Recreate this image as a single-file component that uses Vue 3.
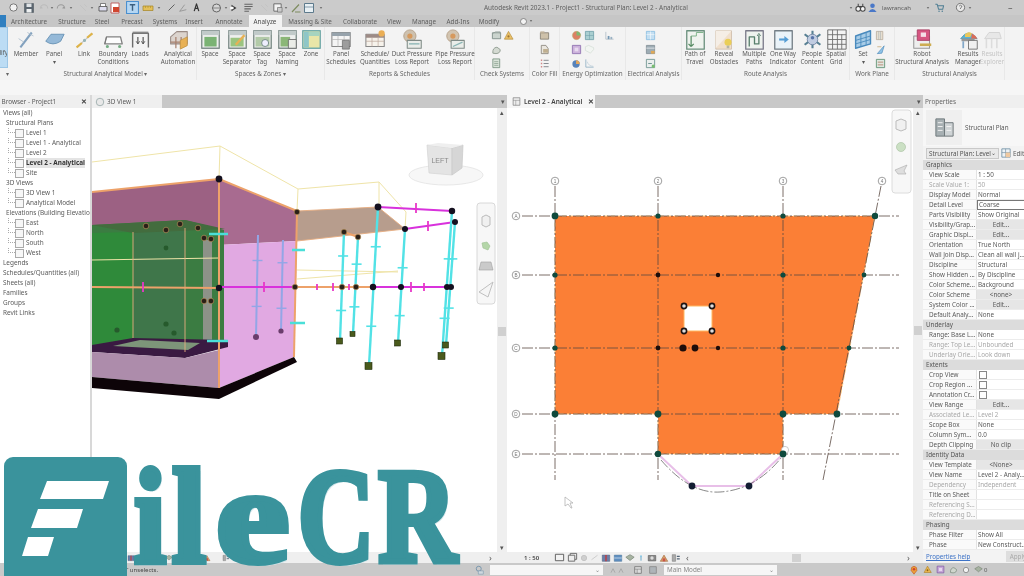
<script setup>
import { h } from 'vue'

const R = (x, y, w, h2) => `M${x} ${y}h${w}v${h2}h${-w}z`
const C = (x, y, r) => `M${x - r} ${y}a${r} ${r} 0 1 0 ${2 * r} 0a${r} ${r} 0 1 0 ${-2 * r} 0z`
const framed = (fill, extra = []) => [
  [R(2, 2, 20, 20), '#eef0ee', '#6f7f7c', 1.6],
  [R(2, 2, 20, 5), '#b9c4c2', 'none', 0],
  ...fill,
  ...extra
]

const icons = {
  member: [['M5 21L18 4', 'none', '#6f93b5', 2.4], ['M3 11l6 4', 'none', '#a5b8c8', 1], ['M13 4l7 4', 'none', '#a5b8c8', 1]],
  panelb: [['M2 14L8 6H23L19 14Q10 20 2 14z', '#85b0d4', '#4d7fa8', 1]],
  link: [['M3 21L21 5', 'none', '#bbb', 1.4], ['M3 21L9 16', 'none', '#dba92c', 2.6], ['M15 10L21 5', 'none', '#dba92c', 2.6], [C(12, 13, 1.8), '#8aa', 'none', 0]],
  boundary: [['M4 9H20L22 17H2z', '#fff', '#6f6f6f', 1.5], ['M4 9L2 17', 'none', '#5f5f5f', 1], [C(5, 20, 1.8), '#5fa070', 'none', 0], [C(19, 20, 1.8), '#5fa070', 'none', 0]],
  loads: [['M3 21V5H21V21', 'none', '#555', 1.6], ['M9 9V17M15 9V17', 'none', '#333', 1.3], ['M9 17l-2-3M9 17l2-3M15 17l-2-3M15 17l2-3', 'none', '#333', 1], [R(3, 3, 18, 2), '#777', 'none', 0]],
  auto: [['M3 9L10 3H22V17H3z', '#d8cfc8', '#8b7a72', 1.2], ['M9 9V22M15 9V22M3 15H22', 'none', '#9a6d58', 1.4], ['M14 13L22 9V19L14 23z', '#e7a63a', '#b27c1e', .8]],
  space: framed([[R(5, 9, 14, 11), '#65a85e', 'none', 0]]),
  sep: framed([[R(4, 10, 15, 10), '#8cbc6c', 'none', 0], ['M10 18L20 7', 'none', '#e6a63a', 2.6]]),
  tag: framed([[R(4, 9, 16, 11), '#a7c49b', 'none', 0], [C(15, 16, 4), '#eef', '#55706a', 1]]),
  naming: framed([[R(4, 9, 11, 11), '#79ad62', 'none', 0], [R(13, 12, 9, 10), '#e9ebe6', '#555', 1]]),
  zone: [[R(2, 2, 20, 20), '#e8e49b', '#5fa0a0', 1.6], [R(3, 3, 6, 18), '#7dbfc0', 'none', 0], [R(9, 3, 12, 5), '#99cfb6', 'none', 0]],
  pansch: [[R(1, 4, 21, 16), '#f6f6f6', '#777', 1.2], [R(1, 4, 21, 4), '#8796a0', 'none', 0], ['M1 12H22M8 8V20M15 8V20', 'none', '#aaa', .8], [R(13, 13, 8, 10), '#8f8f8f', '#444', .7]],
  sched: [[R(1, 6, 21, 14), '#f7f2ea', '#777', 1.2], [R(1, 6, 21, 4), '#8f7a73', 'none', 0], ['M1 14H22M8 10V20M15 10V20', 'none', '#b39a8d', .8], [C(19, 5, 3.6), '#e9a23a', 'none', 0]],
  duct: [[C(9, 8, 7), '#c7b9a4', '#a88f72', 1], [C(9, 8, 3), '#d18a43', 'none', 0], [R(6, 13, 16, 9), '#e9ece8', '#6c7a75', 1.2], ['M8 17H20', 'none', '#7aa', 1.5]],
  pipe: [[C(9, 8, 7), '#cdbca5', '#a88f72', 1], [C(9, 8, 3), '#d18a43', 'none', 0], [R(7, 13, 15, 9), '#e9ece8', '#6c7a75', 1.2], ['M9 20L20 15', 'none', '#7aa', 1.5]],
  path: [[R(2, 2, 20, 21), '#eff4ee', '#54806a', 1.5], ['M7 8V20M7 20l-3-3M7 20l3-3', 'none', '#3c7b4b', 1.4], ['M7 8H13V4H21', 'none', '#5da06b', 1]],
  reveal: [[R(2, 2, 18, 21), '#f0dcc6', '#c9b6a1', 1], ['M2 2L20 2L2 22z', '#f6eee4', 'none', 0], [C(16, 15, 4), '#e9c83c', 'none', 0], [R(14.5, 19, 3, 3), '#aa9', 'none', 0]],
  multi: [[R(2, 2, 20, 21), '#eef2ee', '#667', 1.5], ['M6 20V9H12V17H17V7', 'none', '#3c6b55', 1.5], ['M17 5l-2 3M17 5l2 3', 'none', '#3c6b55', 1]],
  oneway: [[R(2, 2, 20, 21), '#e9f4fb', '#5d6a74', 1.5], ['M7 12H16', 'none', '#3a8fd0', 2.4], ['M13 8l5 4l-5 4z', '#3a8fd0', 'none', 0]],
  people: [[C(12, 12, 6), '#b8c6de', '#5a6f95', 1], [C(12, 10, 2), '#3b5d9b', 'none', 0], ['M12 2V6M12 18V22M3 6L7 9M21 6L17 9M3 18L7 15M21 18L17 15', 'none', '#3e6d84', 2.4]],
  grid: [[R(2, 1, 21, 22), '#f4f4f4', '#555', 1.1], ['M2 6.5H23M2 12H23M2 17.5H23M7.5 1V23M13 1V23M18 6V23', 'none', '#555', 1]],
  set: [['M3 8L20 2V17L3 22z', '#9bc6e6', '#2c78b4', 1.6], ['M3 13L20 8M3 17L20 12M9 6V20M15 4V18', 'none', '#2c78b4', 1]],
  robot: [[R(2, 8, 18, 14), '#eee', '#888', 1.2], [R(6, 1, 14, 12), '#d23a6e', '#98204a', 1], [R(10, 4, 6, 5), '#f6dbe5', 'none', 0], ['M9 18H22', 'none', '#c7a036', 3]],
  results: [['M3 11Q12 -2 22 11z', '#40a9d0', '#2a7d9a', .8], ['M8 6Q12 2 16 5L14 9H8z', '#e9c142', 'none', 0], ['M16 5Q20 7 22 11H15z', '#d9543c', 'none', 0], [R(4, 11, 15, 3), '#888', 'none', 0], [R(12, 13, 10, 10), '#f0f0f0', '#555', 1], ['M6 14V22', 'none', '#6f9ac0', 2]],
  explore: [['M3 11L8 4H20L22 11z', '#e6e6e6', '#ccc', 1], ['M5 11V22M11 11V22M17 11V22', 'none', '#d8d8d8', 1.8]],
  s1: [[R(3, 6, 18, 13), '#c5cfc8', '#6d7f78', 2], ['M3 8L10 4H20V8', 'none', '#7a8a83', 1.6]],
  s2: [['M12 3L22 20H3z', '#eab84e', '#a97a1c', 1.5], [C(12, 14, 2.4), '#8c5f14', 'none', 0]],
  s3: [['M4 20Q3 8 13 7L20 12Q21 20 11 21z', '#cfd6cd', '#7e8c7f', 2]],
  s4: [[R(4, 2, 15, 19), '#d6e2d6', '#5f7d68', 1.8], ['M7 8H16M7 12H16M7 16H16', 'none', '#56745e', 1.2]],
  f1: [[R(3, 6, 18, 14), '#c8b99e', '#6f675a', 1.8], [R(3, 3, 9, 5), '#b5a58a', 'none', 0]],
  f2: [['M5 3H15L20 10V21H5z', '#e8e4dc', '#746e64', 1.8], [R(9, 11, 11, 8), '#b7a47f', 'none', 0]],
  f3: [['M4 5H7M4 12H7M4 19H7', 'none', '#c77', 3], ['M10 5H21M10 12H21M10 19H21', 'none', '#6a6f76', 2]],
  e1: [[C(12, 12, 9), '#d96d4c', '#aa5', 1], ['M12 3A9 9 0 0 1 21 12H12z', '#6aaf5b', 'none', 0]],
  e2: [[R(3, 3, 18, 18), '#9ec9cc', '#4f8a96', 1.6], ['M3 12H21M12 3V21', 'none', '#4f8a96', 1]],
  e3: [[R(3, 3, 18, 18), '#c6a7d8', '#7a55a0', 1.8], [R(8, 8, 8, 8), '#e6d7ef', 'none', 0]],
  e4: [['M3 6L10 3L21 8V12L14 20L3 14z', '#f2f6f2', '#c9d4cc', 1.4]],
  e5: [[C(11, 13, 8), '#3c6fb0', 'none', 0], ['M11 5A8 8 0 0 1 19 13H11z', '#e29a42', 'none', 0]],
  e6: [['M4 3V20H21', 'none', '#7ea3bb', 1.8], ['M7 8Q10 18 20 18', 'none', '#a9c0cf', 1.4]],
  e7: [['M4 4V20H21', 'none', '#9aaab6', 1.6], [R(8, 13, 4, 7), '#5f88a8', 'none', 0], [R(14, 15, 4, 5), '#8aa6bb', 'none', 0]],
  el1: [[R(3, 3, 18, 18), '#bcdcf2', '#76b2dc', 1.8], ['M3 10H21M12 3V21', 'none', '#fff', 1.2]],
  el2: [[R(3, 3, 18, 18), '#8fa0aa', '#5d6b74', 1.4], ['M3 9H21', 'none', '#dfe5e8', 2], [R(13, 15, 8, 6), '#dc9c3c', 'none', 0]],
  el3: [[R(3, 3, 18, 18), '#e9eeec', '#4f7d7a', 1.8], ['M7 12H15', 'none', '#4f7d7a', 2], [C(18, 18, 3.6), '#63b45b', 'none', 0]],
  w1: [[R(3, 3, 14, 18), '#e6dccc', '#aa9a86', 1.6], ['M8 3V21M12 3V21', 'none', '#8b9aa0', 1]],
  w2: [['M5 21L20 4L15 20z', '#7fbce8', '#3c7fb4', 1.6], ['M5 6H14', 'none', '#b99658', 1.6]],
  w3: [[R(3, 3, 18, 18), '#dce6dd', '#3d7a55', 1.8], ['M6 9H18M6 15H18', 'none', '#a3583c', 1.6]],
  q1: [[C(12, 12, 8), '#f2f2f2', '#6e6e6e', 2]],
  q2: [[R(3, 3, 18, 18), '#5b6670', '#404a52', 1], [R(7, 3, 10, 7), '#dfe3e6', 'none', 0], [R(7, 14, 10, 7), '#eef0f1', 'none', 0]],
  q3: [['M3 13A9 9 0 0 1 21 13', 'none', '#bbb', 2.6], ['M3 13l3-5l3 5z', '#bbb', 'none', 0]],
  q4: [['M21 13A9 9 0 0 0 3 13', 'none', '#9a9a9a', 2.6], ['M21 13l-3-5l-3 5z', '#9a9a9a', 'none', 0]],
  q5: [[R(4, 9, 16, 9), '#dde', '#555', 1.8], [R(7, 3, 10, 6), '#fff', '#555', 1.4]],
  q6: [[R(4, 2, 16, 20), '#fff', '#b55', 1.8], [R(8, 10, 12, 10), '#d0452e', 'none', 0]],
  q7: [[R(1, 1, 22, 22), '#b5d6f2', '#4a8fcf', 2], ['M7 7H17M12 7V18', 'none', '#3c5f7f', 2.6]],
  q8: [[R(2, 8, 20, 9), '#e4c05a', '#a58424', 1.4], ['M7 8V12M12 8V12M17 8V12', 'none', '#a58424', 1]],
  q9: [['M4 20L20 4', 'none', '#555', 2.4]],
  q10: [['M4 20L16 4M4 20L20 16', 'none', '#8a8a8a', 1.8]],
  q11: [['M7 20L12 4L17 20M9 14H15', 'none', '#333', 2.6]],
  q12: [[C(11, 12, 8), '#d6d6d6', '#666', 2], ['M3 12H19', 'none', '#666', 1.4]],
  q13: [['M6 4L18 12L6 20z', '#333', 'none', 0], [R(3, 9, 8, 6), '#fff', 'none', 0]],
  q14: [['M3 5H21M3 10H21M3 15H17M3 20H13', 'none', '#666', 2.2]],
  q15: [['M5 5L19 19M15 3L21 9', 'none', '#c2c2c2', 2]],
  q16: [[R(4, 4, 16, 16), '#f3f3f3', '#666', 2], [R(12, 12, 10, 10), '#ccc', '#666', 1.4]],
  q17: [['M4 20L18 5M10 20H21', 'none', '#7e8c60', 2.4]],
  q18: [[R(3, 3, 18, 18), '#e8f0f4', '#5d7a8c', 2], ['M3 10H21', 'none', '#5d7a8c', 1.4]],
  arrow: [['M7 9H17L12 15z', '#555', 'none', 0]],
  bino: [[C(7, 15, 5), '#f5f5f5', '#444', 2.2], [C(17, 15, 5), '#f5f5f5', '#444', 2.2], ['M7 4V10M17 4V10M7 10H17', 'none', '#444', 2.2]],
  user: [[C(12, 8, 5), '#4a78c8', 'none', 0], ['M3 22Q12 8 21 22z', '#4a78c8', 'none', 0]],
  cart: [['M3 5H7L10 16H19L21 8H8', 'none', '#4d7d93', 2.2], [C(11, 20, 1.6), '#4d7d93', 'none', 0], [C(18, 20, 1.6), '#4d7d93', 'none', 0]],
  help: [[C(12, 12, 9), '#e8e8e8', '#555', 1.6], ['M9 9Q12 5 15 9Q15 12 12 13V15', 'none', '#555', 1.6]],
  tabico: [[C(12, 12, 9), '#e8e8e8', '#9aa', 2]],
  planico: [[R(3, 2, 18, 20), '#ededed', '#777', 1.8], ['M3 9H21M10 9V22', 'none', '#777', 1.2]],
  prop: [[R(3, 3, 9, 18), '#a7b0b3', '#6e777a', 1], [R(12, 7, 9, 14), '#cfd4d6', '#6e777a', 1], ['M5 7H10M5 11H10M5 15H10M14 11H19M14 15H19', 'none', '#f4f4f4', 1]],
  editt: [[R(2, 2, 20, 20), '#eef3f6', '#6f8ea3', 2], ['M2 11H22M11 2V22', 'none', '#6f8ea3', 1.6], [R(11, 11, 11, 11), '#f0c9a0', 'none', 0]],
  vc1: [[R(3, 5, 18, 14), '#f2f2f2', '#5a5a5a', 2]],
  vc2: [[R(3, 7, 14, 13), '#eee', '#666', 2], ['M7 7V3H21V16H17', 'none', '#666', 2]],
  vc3: [[C(12, 12, 8), '#cfcfcf', '#bbb', 2]],
  vc4: [['M4 18L20 6', 'none', '#c8c8c8', 2.4]],
  vc5: [[R(3, 5, 18, 15), '#6b7fa8', '#3e4d70', 1], ['M12 5V20', 'none', '#c33', 3]],
  vc6: [[R(3, 5, 18, 15), '#5f8fc0', '#3e6a90', 1], ['M3 12H21', 'none', '#cde', 2]],
  vc7: [['M2 10L12 4L22 10L12 18z', '#a7b3a2', '#6a7868', 1.4]],
  vc8: [['M12 6V20', 'none', '#6aa8c8', 3], [C(12, 7, 3), '#8cc8e4', 'none', 0]],
  vc9: [[R(3, 6, 18, 13), '#8a8a8a', '#555', 1.4], [C(12, 12, 4), '#ddd', 'none', 0]],
  vc10: [['M3 20L12 5L21 20z', '#d7a06a', '#a3693c', 1.4], ['M9 20V13H15V20', '#c9534a', 'none', 0]],
  vc11: [[R(3, 4, 8, 16), '#aaa', '#666', 1], ['M14 8H21M14 14H21', 'none', '#567', 2.6]],
  st1: [['M6 20L12 8L18 20', 'none', '#9a9a9a', 2]],
  st2: [[R(4, 4, 16, 16), '#ddd', '#777', 2], ['M4 10H20M10 10V20', 'none', '#777', 1.4]],
  st3: [[R(4, 4, 16, 16), '#aeb4b8', '#888', 2]],
  st4: [['M12 3Q20 4 19 13L12 22L5 13Q4 4 12 3z', '#e9a23a', '#c65a2e', 1.6], [C(12, 10, 3), '#d3402e', 'none', 0]],
  st5: [[C(9, 9, 6), 'none', '#6c8ea8', 2], [R(8, 14, 12, 8), '#cfd8de', '#6c8ea8', 1.2]]
}

const Ico = (props) =>
  h(
    'svg',
    { viewBox: '0 0 24 24', width: props.s, height: props.s, class: 'ico' },
    (icons[props.k] || []).map((p) =>
      h('path', { d: p[0], fill: p[1], stroke: p[2], 'stroke-width': p[3], 'stroke-linejoin': 'round' })
    )
  )
Ico.props = ['k', 's']

const flow = (items, x0) => {
  let cur = x0
  return items.map((it) => {
    const w = it.w || 18
    const ml = it.c - w / 2 - cur
    cur = it.c + w / 2
    return { ...it, w, ml }
  })
}

const qat = flow(
  [
    ['q1', 13, 11], ['q2', 29, 12], ['q3', 44, 10], ['arrow', 52, 6], ['q4', 61, 10], ['arrow', 71, 6], ['q15', 83, 10], ['arrow', 92, 6],
    ['q5', 103, 12], ['q6', 115, 12], ['q7', 132, 13], ['q8', 148, 12], ['arrow', 159, 6], ['q9', 171, 9], ['q10', 183, 10], ['q11', 196, 11],
    ['q12', 217, 12], ['arrow', 226, 6], ['q13', 234, 10], ['q14', 248, 11], ['q15', 264, 10], ['q16', 277, 11], ['arrow', 286, 6], ['q17', 296, 12], ['q18', 309, 12], ['arrow', 321, 6]
  ].map(([k, c, s]) => ({ k, c, s, w: s })),
  0
)

const tabs = flow(
  [
    ['Architecture', 29, 30], ['Structure', 72, 30], ['Steel', 102, 20], ['Precast', 132, 26], ['Systems', 165, 26], ['Insert', 194, 20], ['Annotate', 229, 28],
    ['Analyze', 265, 33], ['Massing & Site', 310, 44], ['Collaborate', 360, 36], ['View', 394, 18], ['Manage', 424, 28], ['Add-Ins', 458, 26], ['Modify', 489, 24]
  ].map(([t, c, w]) => ({ t, c, w })),
  6
)

const big = (k, c, ...label) => ({ k, c, label, w: 18 })
const col = (c, ...keys) => ({ c, col: keys, w: 13 })

const panels = [
  { title: 'Structural Analytical Model ▾', x0: 15, x1: 197, items: [big('member', 26, 'Member'), big('panelb', 54, 'Panel', '▾'), big('link', 84, 'Link'), big('boundary', 113, 'Boundary', 'Conditions'), big('loads', 140, 'Loads'), big('auto', 178, 'Analytical', 'Automation')] },
  { title: 'Spaces & Zones ▾', x0: 197, x1: 325, items: [big('space', 210, 'Space'), big('sep', 237, 'Space', 'Separator'), big('tag', 262, 'Space', 'Tag'), big('naming', 287, 'Space', 'Naming'), big('zone', 311, 'Zone')] },
  { title: 'Reports & Schedules', x0: 325, x1: 475, items: [big('pansch', 341, 'Panel', 'Schedules'), big('sched', 375, 'Schedule/', 'Quantities'), big('duct', 412, 'Duct Pressure', 'Loss Report'), big('pipe', 455, 'Pipe Pressure', 'Loss Report')] },
  { title: 'Check Systems', x0: 475, x1: 530, items: [col(496, 's1', 's3', 's4'), col(508, 's2')] },
  { title: 'Color Fill', x0: 530, x1: 560, items: [col(544, 'f1', 'f2', 'f3')] },
  { title: 'Energy Optimization', x0: 560, x1: 626, items: [col(576, 'e1', 'e3', 'e5'), col(589, 'e2', 'e4', 'e6'), col(609, 'e7')] },
  { title: 'Electrical Analysis', x0: 626, x1: 682, items: [col(650, 'el1', 'el2', 'el3')] },
  { title: 'Route Analysis', x0: 682, x1: 850, items: [big('path', 695, 'Path of', 'Travel'), big('reveal', 724, 'Reveal', 'Obstacles'), big('multi', 754, 'Multiple', 'Paths'), big('oneway', 783, 'One Way', 'Indicator'), big('people', 812, 'People', 'Content'), big('grid', 836, 'Spatial', 'Grid')] },
  { title: 'Work Plane', x0: 850, x1: 895, items: [big('set', 863, 'Set', '▾'), col(880, 'w1', 'w2', 'w3')] },
  { title: 'Structural Analysis', x0: 895, x1: 1005, items: [big('robot', 922, 'Robot', 'Structural Analysis'), big('results', 968, 'Results', 'Manager'), { ...big('explore', 992, 'Results', 'Explorer'), faded: true }] }
].map((p) => ({ ...p, width: p.x1 - p.x0, items: flow(p.items, p.x0) }))

const tree = [
  ['Views (all)', 3], ['Structural Plans', 6],
  ['Level 1', 26, 1], ['Level 1 - Analytical', 26, 1], ['Level 2', 26, 1], ['Level 2 - Analytical', 26, 1, 1], ['Site', 26, 1],
  ['3D Views', 6], ['3D View 1', 26, 1], ['Analytical Model', 26, 1],
  ['Elevations (Building Elevation)', 6], ['East', 26, 1], ['North', 26, 1], ['South', 26, 1], ['West', 26, 1],
  ['Legends', 3], ['Schedules/Quantities (all)', 3], ['Sheets (all)', 3], ['Families', 3], ['Groups', 3], ['Revit Links', 3]
].map(([t, x, box, bold]) => ({ t, x: box ? 8 : x, box, bold }))

const props_ = [
  ['Graphics', '', 'h'], ['View Scale', '1 : 50'], ['Scale Value    1:', '50', 'g'], ['Display Model', 'Normal'], ['Detail Level', 'Coarse', 'i'], ['Parts Visibility', 'Show Original'],
  ['Visibility/Grap...', 'Edit...', 'b'], ['Graphic Displ...', 'Edit...', 'b'], ['Orientation', 'True North'], ['Wall Join Disp...', 'Clean all wall j...'], ['Discipline', 'Structural'],
  ['Show Hidden ...', 'By Discipline'], ['Color Scheme...', 'Background'], ['Color Scheme', '<none>', 'b'], ['System Color ...', 'Edit...', 'b'], ['Default Analy...', 'None'],
  ['Underlay', '', 'h'], ['Range: Base L...', 'None'], ['Range: Top Le...', 'Unbounded', 'g'], ['Underlay Orie...', 'Look down', 'g'],
  ['Extents', '', 'h'], ['Crop View', '', 'c'], ['Crop Region ...', '', 'c'], ['Annotation Cr...', '', 'c'], ['View Range', 'Edit...', 'b'], ['Associated Le...', 'Level 2', 'g'], ['Scope Box', 'None'], ['Column Sym...', '0.0'], ['Depth Clipping', 'No clip', 'b'],
  ['Identity Data', '', 'h'], ['View Template', '<None>', 'b'], ['View Name', 'Level 2 - Analy...'], ['Dependency', 'Independent', 'g'], ['Title on Sheet', ''], ['Referencing S...', '', 'g'], ['Referencing D...', '', 'g'],
  ['Phasing', '', 'h'], ['Phase Filter', 'Show All'], ['Phase', 'New Construct...']
].map(([l, v, t]) => ({ l, v, t }))

/* 3D view data, in page coordinates */
const faces = [
  ['92,192 219,179 219,230 92,225', '#9c6183'],
  ['219,179 297,211 297,241 219,245', '#a86b90'],
  ['297,211 378,207 405,229 297,241', '#b79d8d'],
  ['219,245 297,241 294,357 219,388', '#e1a9e2'],
  ['92,225 185,220 224,230 224,346 92,346', '#3b7c42'],
  ['92,233 133,232 133,338 92,345', '#2f8a3a'],
  ['133,232 185,228 185,338 133,338', '#3f764a'],
  ['92,225 185,220 225,229 133,233', '#436c3e'],
  ['203,240 212,240 212,345 203,345', '#8d9288'],
  ['92,345 133,338 228,340 228,347 185,358 92,352', '#3a1a42'],
  ['113,346 140,340 200,343 188,350', '#7d9579'],
  ['92,352 185,358 219,350 219,388 92,377', '#ad8cab'],
  ['92,377 219,388 219,399 92,388', '#0d0408'],
  ['219,388 294,357 297,362 219,399', '#0d0408']
]
const wire = 'M92 162L220 146L298 189L297 211M220 146L219 179M298 189L379 182L406 212L405 229M379 182L379 207M92 260L219 258M297 270L398 272M297 279L398 271'
const orangeLines = [
  [92, 192, 219, 179], [219, 179, 297, 211], [219, 179, 219, 388], [297, 211, 294, 357], [92, 287, 220, 288], [297, 287, 373, 287], [344, 232, 358, 237]
]
const thinOrange = 'M297 211L378 207L405 229L297 241M185 228L185 352M133 232L133 338'
const magLines = [[220, 287, 297, 287], [373, 287, 452, 287], [378, 207, 452, 211], [405, 229, 455, 222]]
const cols3d = [
  { a: [378, 207], b: [369, 366], t: [.25, .75] },
  { a: [405, 229], b: [398, 343], t: [.34, .76] },
  { a: [344, 232], b: [340, 341], t: [.22, .72] },
  { a: [358, 237], b: [353, 334], t: [.28, .72] },
  { a: [452, 211], b: [442, 356], t: [.33, .74] },
  { a: [455, 222], b: [446, 345], t: [.3, .7] }
]
const bluecols = [
  { a: [258, 235], b: [256, 337], t: [.25, .7] },
  { a: [283, 240], b: [281, 331], t: [.25, .75] }
]
const mkTicks = (cols) =>
  cols.flatMap((c) =>
    c.t.map((t) => ({
      x: c.a[0] + (c.b[0] - c.a[0]) * t,
      y: c.a[1] + (c.b[1] - c.a[1]) * t
    }))
  )
const ticks3d = mkTicks(cols3d)
const ticksBlue = mkTicks(bluecols)
const footings = [[340, 341, 6], [353, 334, 5], [369, 366, 7], [398, 343, 6], [442, 356, 7], [446, 345, 6]]
const pinkTicks = [[143, 287, 5], [264, 287, 5], [317, 287, 3], [333, 287, 4], [349, 287, 3], [411, 287, 5], [424, 287, 4], [416, 208, 5], [428, 226, 5]]
const blackNodes = [[219, 179, 3.4], [219, 288, 3.2], [378, 207, 3.4], [452, 211, 3.2], [455, 222, 3], [373, 287, 3.2], [401, 287, 3], [447, 287, 3], [451, 287, 3], [405, 229, 3]]
const ringNodes = [[297, 212], [295, 287], [344, 232], [358, 237], [342, 287], [356, 287], [204, 238], [211, 239], [204, 301], [211, 301], [146, 226], [166, 230], [180, 224], [198, 228]]

/* Plan view data */
const vGrid = [[555, '1'], [658, '2'], [783, '3']]
const hGrid = [[216, 'A'], [275, 'B'], [348, 'C'], [414, 'D'], [454, 'E']]
const planNodes = [
  [555, 216, 3.4], [658, 216, 2.6], [783, 216, 2.6], [875, 216, 3.2], [555, 275, 2.6], [783, 275, 2.6], [864, 275, 2.4],
  [555, 348, 2.6], [783, 348, 2.6], [849, 348, 2.4], [555, 414, 3.4], [658, 414, 3.4], [783, 414, 3.4], [837, 414, 3.4], [658, 454, 3.2], [783, 454, 3.4]
]
const planDark = [[658, 275, 2.4], [718, 275, 2.2], [658, 348, 2.4], [718, 348, 2.2], [683, 348, 3.6], [695, 348, 3.4]]
const rings = [[684, 306], [712, 306], [684, 331], [712, 331]]

/* Logo letters: cell width and horizontal scale that give the wordmark its proportions */
const logoLetters = [
  { ch: 'i', w: 38, sx: 0.85 },
  { ch: 'l', w: 40, sx: 0.9 },
  { ch: 'e', w: 87, sx: 1.22 },
  { ch: 'C', w: 80, sx: 0.78 },
  { ch: 'R', w: 83, sx: 0.8 }
]
</script>

<template>
  <div class="app">
    <div class="ui">
      <header class="titlebar">
        <Ico v-for="(q, i) in qat" :key="i" :k="q.k" :s="q.s" :style="{ marginLeft: q.ml + 'px' }" />
        <span class="title">Autodesk Revit 2023.1 - Project1 - Structural Plan: Level 2 - Analytical</span>
        <span class="tright">
          <Ico k="arrow" :s="6" />
          <Ico k="bino" :s="11" />
          <Ico k="user" :s="11" />
          <span class="uname">lawrancah</span>
          <Ico k="arrow" :s="6" class="mlarrow" />
          <Ico k="cart" :s="11" class="mlcart" />
          <Ico k="help" :s="11" class="mlhelp" />
          <Ico k="arrow" :s="6" />
          <span class="winmin">–</span>
        </span>
      </header>

      <nav class="tabs">
        <span class="filetab"></span>
        <span
          v-for="t in tabs"
          :key="t.t"
          class="tab"
          :class="{ active: t.t === 'Analyze' }"
          :style="{ marginLeft: t.ml + 'px', width: t.w + 'px' }"
        >{{ t.t }}</span>
        <span class="tabextra"><Ico k="q1" :s="9" /><Ico k="arrow" :s="6" /></span>
      </nav>

      <section class="ribbon">
        <div class="modify">
          <div class="modbtn"><span>dify</span></div>
          <span class="paneltitle">▾</span>
        </div>
        <div v-for="p in panels" :key="p.title" class="panel" :style="{ width: p.width + 'px' }">
          <div class="items">
            <template v-for="(it, i) in p.items" :key="i">
              <div v-if="it.col" class="smallcol" :style="{ marginLeft: it.ml + 'px', width: it.w + 'px' }">
                <Ico v-for="k in it.col" :key="k" :k="k" :s="11" />
              </div>
              <div v-else class="bigbtn" :class="{ faded: it.faded }" :style="{ marginLeft: it.ml + 'px', width: it.w + 'px' }">
                <Ico :k="it.k" :s="21" />
                <span v-for="l in it.label" :key="l" class="lbl">{{ l }}</span>
              </div>
            </template>
          </div>
          <div class="paneltitle">{{ p.title }}</div>
        </div>
      </section>
      <div class="strip"></div>

      <div class="work">
        <aside class="browser">
          <div class="phead browserhead"><span>Project Browser - Project1</span><b class="closex">✕</b></div>
          <div class="tree">
            <div v-for="r in tree" :key="r.t" class="trow" :style="{ paddingLeft: r.x + 'px' }" :class="{ bold: r.bold }">
              <i v-if="r.box" class="twig"></i>
              <i v-if="r.box" class="chk"></i>
              <span>{{ r.t }}</span>
            </div>
          </div>
        </aside>

        <section class="view v3d">
          <div class="vtabs">
            <div class="vtab"><Ico k="tabico" :s="10" /><span>3D View 1</span></div>
            <span class="vdrop">▾</span>
          </div>
          <div class="vbody">
            <svg class="canvas" width="405" height="444" viewBox="92 108 405 444">
              <rect x="92" y="108" width="405" height="444" fill="#fff" />
              <polygon v-for="(f, i) in faces" :key="i" :points="f[0]" :fill="f[1]" />
              <path :d="wire" fill="none" stroke="#efe4a8" stroke-width="1" />
              <path :d="thinOrange" fill="none" stroke="#e6ad80" stroke-width=".9" />
              <line v-for="(l, i) in bluecols" :key="'b' + i" :x1="l.a[0]" :y1="l.a[1]" :x2="l.b[0]" :y2="l.b[1]" stroke="#93a6e6" stroke-width="2" />
              <line v-for="(t, i) in ticksBlue" :key="'bt' + i" :x1="t.x - 5" :y1="t.y" :x2="t.x + 5" :y2="t.y" stroke="#93a6e6" stroke-width="1.4" />
              <line v-for="(l, i) in orangeLines" :key="'o' + i" :x1="l[0]" :y1="l[1]" :x2="l[2]" :y2="l[3]" stroke="#eda26a" stroke-width="2" />
              <line v-for="(l, i) in magLines" :key="'m' + i" :x1="l[0]" :y1="l[1]" :x2="l[2]" :y2="l[3]" stroke="#d832dc" stroke-width="2" />
              <line v-for="(c, i) in cols3d" :key="'c' + i" :x1="c.a[0]" :y1="c.a[1]" :x2="c.b[0]" :y2="c.b[1]" stroke="#52e2e6" stroke-width="2.4" />
              <line v-for="(t, i) in ticks3d" :key="'t' + i" :x1="t.x - 5" :y1="t.y" :x2="t.x + 5" :y2="t.y" stroke="#52e2e6" stroke-width="1.6" />
              <path d="M209 234H228M207 341H228M292 250H305M290 323H305" stroke="#4adfd8" stroke-width="2.4" fill="none" />
              <line v-for="(t, i) in pinkTicks" :key="'p' + i" :x1="t[0]" :y1="t[1] - t[2]" :x2="t[0]" :y2="t[1] + t[2]" stroke="#e837c8" stroke-width="1.8" />
              <rect v-for="(f, i) in footings" :key="'f' + i" :x="f[0] - f[2] / 2 - .5" :y="f[1] - f[2] / 2" :width="f[2]" :height="f[2]" fill="#4a5a1c" stroke="#1f2a0c" stroke-width=".6" />
              <circle cx="256" cy="337" r="3" fill="#6a3c6c" />
              <circle cx="281" cy="331" r="2.6" fill="#6a3c6c" />
              <circle v-for="(n, i) in blackNodes" :key="'n' + i" :cx="n[0]" :cy="n[1]" :r="n[2]" fill="#14101f" />
              <circle v-for="(n, i) in ringNodes" :key="'r' + i" :cx="n[0]" :cy="n[1]" r="2.8" fill="#2a2018" stroke="#c59a60" stroke-width=".6" />
              <circle cx="166" cy="248" r="2.4" fill="#265a2c" /><circle cx="166" cy="324" r="2.6" fill="#265a2c" /><circle cx="117" cy="330" r="2.6" fill="#265a2c" /><circle cx="174" cy="333" r="2.6" fill="#265a2c" />
              <!-- view cube -->
              <ellipse cx="446" cy="175" rx="37" ry="10" fill="#f7f7f7" stroke="#e8e8e8" />
              <polygon points="427,145 452,148 452,175 429,173" fill="#e4e4e4" stroke="#d4d4d4" stroke-width=".7" />
              <polygon points="452,148 463,145 462,168 452,175" fill="#d6d6d6" stroke="#c8c8c8" stroke-width=".7" />
              <polygon points="427,145 438,143 463,145 452,148" fill="#efefef" />
              <text x="440" y="163" class="cube">LEFT</text>
              <!-- nav bar -->
              <rect x="477" y="203" width="18" height="101" rx="3" fill="#f7f7f7" stroke="#d8d8d8" />
              <path d="M482 217l4-2 4 2v8l-4 2-4-2z" fill="#f0f0f0" stroke="#bbb" />
              <path d="M482 243l5-1 3 4-2 4-5-2z" fill="#b4d6a8" stroke="#9cc090" stroke-width=".6" />
              <path d="M481 262h10l2 8h-14z" fill="#cacaca" stroke="#a0a0a0" stroke-width=".6" />
              <path d="M479 292l14-10-5 15z" fill="#f5f5f5" stroke="#c0c0c0" />
            </svg>
            <div class="vscroll">
              <span class="arr">▴</span>
              <i class="thumb thumb1"></i>
              <span class="arr bottom">▾</span>
            </div>
          </div>
          <div class="vfoot foot3d">
            <Ico v-for="k in ['vc5', 'vc6', 'vc7', 'vc9', 'vc10', 'vc11', 'vc3', 'vc4', 'vc8']" :key="k" :k="k" :s="8" />
            <span class="footarrow">›</span>
          </div>
        </section>

        <section class="view vplan">
          <div class="vtabs">
            <div class="vtab planTab"><Ico k="planico" :s="9" /><b class="plantitle">Level 2 - Analytical</b><b class="tabx">✕</b></div>
            <span class="vdrop right">▾</span>
          </div>
          <div class="vbody">
            <svg class="canvas" width="406" height="444" viewBox="507 108 406 444">
              <rect x="507" y="108" width="406" height="444" fill="#fff" />
              <polygon points="555,216 875,216 837,414 783,414 783,454 658,454 658,414 555,414" fill="#fb7f36" stroke="#ffd292" stroke-width="1" stroke-dasharray="4 3" />
              <rect x="684" y="306" width="28" height="25" fill="#fff" stroke="#ffb860" />
              <g stroke="#5a4a42" stroke-width=".8" stroke-dasharray="11 2 2 2" fill="none">
                <line v-for="v in vGrid" :key="v[0]" :x1="v[0]" y1="186" :x2="v[0]" y2="480" />
                <line x1="881" y1="186" x2="823" y2="480" />
                <line v-for="g in hGrid" :key="g[0]" x1="522" :y1="g[0]" x2="899" :y2="g[0]" />
              </g>
              <g v-for="v in vGrid" :key="'vb' + v[0]">
                <circle :cx="v[0]" cy="181" r="3.8" fill="#fff" stroke="#777" stroke-width=".7" />
                <text :x="v[0]" y="183" class="bub">{{ v[1] }}</text>
              </g>
              <circle cx="882" cy="181" r="3.8" fill="#fff" stroke="#777" stroke-width=".7" />
              <text x="882" y="183" class="bub">4</text>
              <g v-for="g in hGrid" :key="'hb' + g[0]">
                <circle cx="516" :cy="g[0]" r="3.8" fill="#fff" stroke="#777" stroke-width=".7" />
                <text x="516" :y="g[0] + 2" class="bub">{{ g[1] }}</text>
              </g>
              <circle cx="785" cy="450" r="3.6" fill="#fff" stroke="#aaa" stroke-width=".6" />
              <path d="M659 455L692 486H749L782 455" fill="none" stroke="#e8bfe8" stroke-width="2" />
              <path d="M661 460Q690 494 720 492Q755 490 781 458" fill="none" stroke="#555" stroke-width=".7" stroke-dasharray="10 2 2 2" />
              <circle v-for="(n, i) in planNodes" :key="'pn' + i" :cx="n[0]" :cy="n[1]" :r="n[2]" fill="#0f4a3d" />
              <circle v-for="(n, i) in planDark" :key="'pd' + i" :cx="n[0]" :cy="n[1]" :r="n[2]" fill="#1d0d0a" />
              <circle v-for="(n, i) in rings" :key="'ri' + i" :cx="n[0]" :cy="n[1]" r="2.6" fill="#ddd" stroke="#1d1414" stroke-width="1.6" />
              <circle cx="692" cy="486" r="3.4" fill="#131d33" /><circle cx="749" cy="486" r="3.4" fill="#131d33" />
              <path d="M565 497V506L568 504L571 508H572L570 503H573z" fill="#fff" stroke="#aaa" stroke-width=".7" />
              <!-- nav bar -->
              <rect x="892" y="110" width="19" height="83" rx="3" fill="#f7f7f7" stroke="#dcdcdc" />
              <path d="M896 121l5-2 5 2v8l-5 2-5-2z" fill="#f0f0f0" stroke="#bbb" />
              <circle cx="901" cy="147" r="4.5" fill="#cbe0c4" stroke="#aec4a6" stroke-width=".7" />
              <path d="M895 170l12-5-3 6 2 3h-8z" fill="#dedede" stroke="#aaa" stroke-width=".6" />
            </svg>
            <div class="vscroll">
              <span class="arr">▴</span>
              <i class="thumb thumb2"></i>
              <span class="arr bottom">▾</span>
            </div>
          </div>
          <div class="vfoot footplan">
            <span class="scale">1 : 50</span>
            <Ico k="vc1" :s="11" />
            <Ico k="vc2" :s="11" />
            <Ico k="vc3" :s="8" />
            <Ico k="vc4" :s="9" />
            <Ico k="vc5" :s="10" />
            <Ico k="vc6" :s="10" />
            <Ico k="vc7" :s="10" />
            <Ico k="vc8" :s="8" />
            <Ico k="vc9" :s="10" />
            <Ico k="vc10" :s="10" />
            <Ico k="vc11" :s="10" />
            <span class="lt">‹</span>
            <i class="hthumb"></i>
            <span class="gt">›</span>
          </div>
        </section>

        <aside class="props">
          <div class="phead propshead">Properties</div>
          <div class="typebox">
            <div class="typeimg"><Ico k="prop" :s="23" /></div>
            <span>Structural Plan</span>
          </div>
          <div class="typesel">
            <div class="select"><span>Structural Plan: Level</span><span class="chev">⌄</span></div>
            <Ico k="editt" :s="10" />
            <span class="editl">Edit</span>
          </div>
          <div class="ptable">
            <template v-for="p in props_" :key="p.l">
              <div v-if="p.t === 'h'" class="phdr">{{ p.l }}</div>
              <div v-else class="prow" :class="{ dim: p.t === 'g' }">
                <span class="pl">{{ p.l }}</span>
                <span class="pv" :class="{ btn: p.t === 'b', inp: p.t === 'i' }">
                  <i v-if="p.t === 'c'" class="pchk"></i>{{ p.v }}
                </span>
              </div>
            </template>
          </div>
          <div class="pfoot"><a class="phelp">Properties help</a><span class="apply">Apply</span></div>
        </aside>
      </div>

      <footer class="status">
        <div class="stext">SHIFT unselects.</div>
        <span class="stico first"><Ico k="st5" :s="10" /></span>
        <div class="sinput wide"><span class="schev">⌄</span></div>
        <Ico k="st1" :s="8" class="g1" />
        <Ico k="st1" :s="8" />
        <Ico k="st2" :s="10" class="g2" />
        <Ico k="st3" :s="10" class="g3" />
        <div class="sinput model"><span>Main Model</span><span class="schev">⌄</span></div>
        <span class="sright">
          <Ico k="st4" :s="10" />
          <Ico k="s2" :s="9" />
          <Ico k="e3" :s="9" />
          <Ico k="s3" :s="9" />
          <Ico k="q1" :s="8" />
          <Ico k="vc7" :s="9" />
          <span class="szero">0</span>
        </span>
      </footer>
    </div>

    <div class="logo">
      <div class="logomark">
        <svg width="123" height="119" viewBox="4 457 123 119">
          <path d="M47 481H109L103 499H40zM38 509H83L77 528H31zM28 537H54L48 556H22z" fill="#fff" />
        </svg>
      </div>
      <span class="logotext">
        <span
          v-for="l in logoLetters"
          :key="l.ch"
          class="logoletter"
          :style="{ width: l.w + 'px', transform: 'scaleX(' + l.sx + ')' }"
        >{{ l.ch }}</span>
      </span>
    </div>
  </div>
</template>

<style>
html, body { margin: 0; overflow: hidden; background: #fff; }
</style>

<style scoped>
.app { position: relative; width: 1024px; height: 576px; overflow: hidden; font-family: "Noto Sans", "Liberation Sans", sans-serif; font-size: 6.3px; color: #5a5a5a; }
.ui { width: 1024px; height: 576px; display: flex; flex-direction: column; filter: blur(.55px); background: #fff; }
.ico { flex: none; display: block; }

.titlebar { height: 15px; background: #cbcbcb; display: flex; align-items: center; flex: none; }
.title { position: absolute; left: 484px; font-size: 6.4px; color: #5f5f5f; white-space: nowrap; }
.tright { position: absolute; left: 848px; display: flex; align-items: center; gap: 1px; }
.uname { margin-left: 3px; width: 34px; font-size: 6px; }
.mlarrow { margin-left: 8px; }
.mlcart { margin-left: 2px; }
.mlhelp { margin-left: 9px; }
.winmin { margin-left: 34px; font-size: 9px; line-height: 8px; }

.tabs { height: 12px; background: #c6c6c6; display: flex; align-items: stretch; flex: none; position: relative; }
.filetab { width: 6px; background: #2f7fc0; flex: none; }
.tab { display: flex; align-items: center; justify-content: center; white-space: nowrap; flex: none; font-size: 6.3px; color: #5f5f5f; }
.tab.active { background: #f3f3f3; color: #4a4a4a; }
.tabextra { display: flex; align-items: center; margin-left: 18px; }

.ribbon { height: 53px; background: #f3f3f3; display: flex; flex: none; position: relative; }
.modify { width: 15px; flex: none; display: flex; flex-direction: column; }
.modbtn { width: 8px; height: 41px; background: #bcdcf4; border: 1px solid #9cc6e6; border-left: 0; box-sizing: border-box; overflow: hidden; display: flex; align-items: flex-end; justify-content: flex-end; padding-bottom: 10px; }
.modbtn span { font-size: 6.2px; margin-right: -1px; }
.panel { flex: none; display: flex; flex-direction: column; border-right: 1px solid #e8e8e8; box-sizing: border-box; }
.items { height: 41px; display: flex; }
.bigbtn { flex: none; display: flex; flex-direction: column; align-items: center; padding-top: 2px; white-space: nowrap; line-height: 8.3px; font-size: 6.2px; }
.bigbtn .ico { margin-bottom: 0; opacity: .85; }
.bigbtn.faded { color: #c4c4c4; }
.smallcol { flex: none; display: flex; flex-direction: column; align-items: center; gap: 3px; padding-top: 3px; }
.smallcol .ico { opacity: .85; }
.paneltitle { height: 12px; line-height: 11px; text-align: center; white-space: nowrap; color: #666; font-size: 6.3px; }

.strip { height: 15px; flex: none; background: #f6f6f6; }

.work { height: 468px; flex: none; display: flex; background: #d8d8d8; }
.phead { height: 13px; box-sizing: border-box; background: #efefef; display: flex; align-items: center; font-size: 6.4px; white-space: nowrap; }
.browser { width: 90px; flex: none; background: #fff; overflow: hidden; margin-right: 2px; position: relative; }
.browserhead span { margin-left: -21px; }
.closex { position: absolute; left: 81px; top: 2px; font-size: 7px; color: #444; }
.tree { height: 455px; background: #fff; }
.trow { height: 10px; line-height: 10px; display: flex; align-items: center; white-space: nowrap; font-size: 6.4px; color: #5a5a5a; }
.trow.bold span { font-weight: 700; background: #e4e4e4; color: #333; }
.twig { flex: none; width: 7px; height: 5px; margin-top: -5px; border-left: 1px dotted #aaa; border-bottom: 1px dotted #aaa; box-sizing: border-box; }
.chk { flex: none; width: 7px; height: 7px; border: 1px solid #aaa; background: #f7f7f7; margin-right: 2px; }

.view { flex: none; display: flex; flex-direction: column; }
.v3d { width: 415px; }
.vplan { width: 416px; }
.vtabs { height: 13px; background: #c8c8c8; display: flex; flex: none; position: relative; }
.vtab { display: flex; align-items: center; background: #efefef; width: 70px; padding-left: 3px; gap: 2px; box-sizing: border-box; font-size: 6.4px; white-space: nowrap; }
.planTab { width: 88px; padding-left: 5px; gap: 3px; background: #f6f6f6; }
.plantitle { font-size: 6.5px; font-weight: 600; color: #444; }
.tabx { margin-left: 3px; font-size: 7px; color: #444; }
.vdrop { position: absolute; right: 2px; top: 0; font-size: 7px; line-height: 13px; color: #555; }
.vbody { height: 444px; display: flex; flex: none; }
.canvas { display: block; flex: none; }
.vscroll { width: 10px; background: #efefef; position: relative; flex: none; display: flex; flex-direction: column; align-items: center; }
.arr { font-size: 7px; line-height: 9px; color: #555; }
.arr.bottom { position: absolute; bottom: 0; }
.thumb { position: absolute; left: 1px; width: 8px; height: 9px; background: #d0d0d0; }
.thumb1 { top: 219px; }
.thumb2 { top: 218px; }
.cube { font-family: "Liberation Sans", sans-serif; font-size: 7px; fill: #8a8a8a; text-anchor: middle; }
.bub { font-family: "Liberation Sans", sans-serif; font-size: 4.6px; fill: #777; text-anchor: middle; }

.vfoot { height: 11px; background: #efefef; display: flex; align-items: center; position: relative; flex: none; }
.foot3d { padding-left: 35px; gap: 11px; }
.footarrow { position: absolute; left: 397px; font-size: 9px; line-height: 9px; }
.footplan { gap: 2px; }
.scale { margin-left: 17px; font-size: 6px; width: 28px; color: #444; font-weight: 600; }
.lt { margin-left: 3px; font-size: 9px; line-height: 9px; }
.hthumb { position: absolute; left: 285px; width: 9px; height: 8px; background: #d2d2d2; }
.gt { position: absolute; left: 400px; font-size: 9px; line-height: 9px; }

.props { width: 101px; flex: none; background: #f3f3f3; overflow: hidden; display: flex; flex-direction: column; }
.propshead { padding-left: 2px; color: #666; }
.typebox { height: 38px; display: flex; align-items: center; box-sizing: border-box; padding-left: 3px; background: #f7f7f7; }
.typeimg { width: 36px; height: 35px; background: #efefef; display: flex; align-items: center; justify-content: center; margin-right: 3px; }
.typesel { height: 14px; display: flex; align-items: center; padding-left: 3px; gap: 2px; flex: none; white-space: nowrap; }
.select { width: 73px; height: 11px; background: #e9e9e9; border: 1px solid #c9c9c9; box-sizing: border-box; display: flex; justify-content: space-between; align-items: center; padding: 0 2px; flex: none; color: #555; }
.chev { line-height: 6px; }
.ptable { height: 390px; flex: none; background: #fff; }
.phdr { height: 10px; line-height: 10px; background: #dcdcdc; padding-left: 3px; color: #555; }
.prow { height: 10px; display: flex; background: #fff; box-sizing: border-box; border-bottom: 1px solid #ececec; }
.pl { width: 54px; flex: none; padding-left: 6px; box-sizing: border-box; line-height: 9px; white-space: nowrap; overflow: hidden; border-right: 1px solid #e2e2e2; background: #fafafa; }
.pv { flex: 1; padding-left: 1px; line-height: 9px; white-space: nowrap; overflow: hidden; display: flex; align-items: center; }
.btn { background: #e6e6e6; justify-content: center; }
.inp { border: 1px solid #777; border-right: 0; box-sizing: border-box; height: 10px; line-height: 8px; }
.pchk { width: 6px; height: 6px; margin-left: 1px; border: 1px solid #888; background: #fff; }
.dim { color: #a8a8a8; }
.pfoot { height: 13px; display: flex; align-items: center; justify-content: space-between; flex: none; }
.phelp { color: #3d72c6; margin-left: 3px; text-decoration: underline; font-size: 6.2px; }
.apply { background: #dedede; width: 24px; margin-right: -6px; height: 11px; line-height: 11px; text-align: center; color: #aaa; }

.status { height: 13px; background: #c9c9c9; display: flex; align-items: center; flex: none; position: relative; }
.stext { width: 158px; flex: none; text-align: right; white-space: nowrap; overflow: hidden; font-size: 6px; color: #444; }
.stico.first { margin-left: 317px; }
.sinput { background: #f6f6f6; height: 10px; display: flex; align-items: center; justify-content: space-between; box-sizing: border-box; padding: 0 3px; color: #888; }
.wide { width: 113px; margin-left: 5px; justify-content: flex-end; }
.g1 { margin-left: 6px; }
.g2 { margin-left: 8px; }
.g3 { margin-left: 5px; }
.model { width: 113px; margin-left: 6px; }
.schev { line-height: 5px; }
.sright { position: absolute; left: 909px; display: flex; align-items: center; gap: 4px; }
.szero { font-size: 6px; margin-left: -3px; }

.logo { position: absolute; left: 4px; top: 457px; display: flex; filter: blur(.3px); }
.logomark { width: 123px; height: 130px; background: #3a939c; border-radius: 9px; flex: none; }
.logomark svg { display: block; }
.logotext { display: flex; margin: -9px 0 0 4px; height: 136px; font-family: "Liberation Serif", serif; font-weight: 700; font-size: 136px; line-height: 136px; color: #3a939c; -webkit-text-stroke: 6px #3a939c; text-shadow: 3px 3px 0 #d3e6ea; white-space: nowrap; }
.logoletter { display: flex; justify-content: center; flex: none; }
</style>
